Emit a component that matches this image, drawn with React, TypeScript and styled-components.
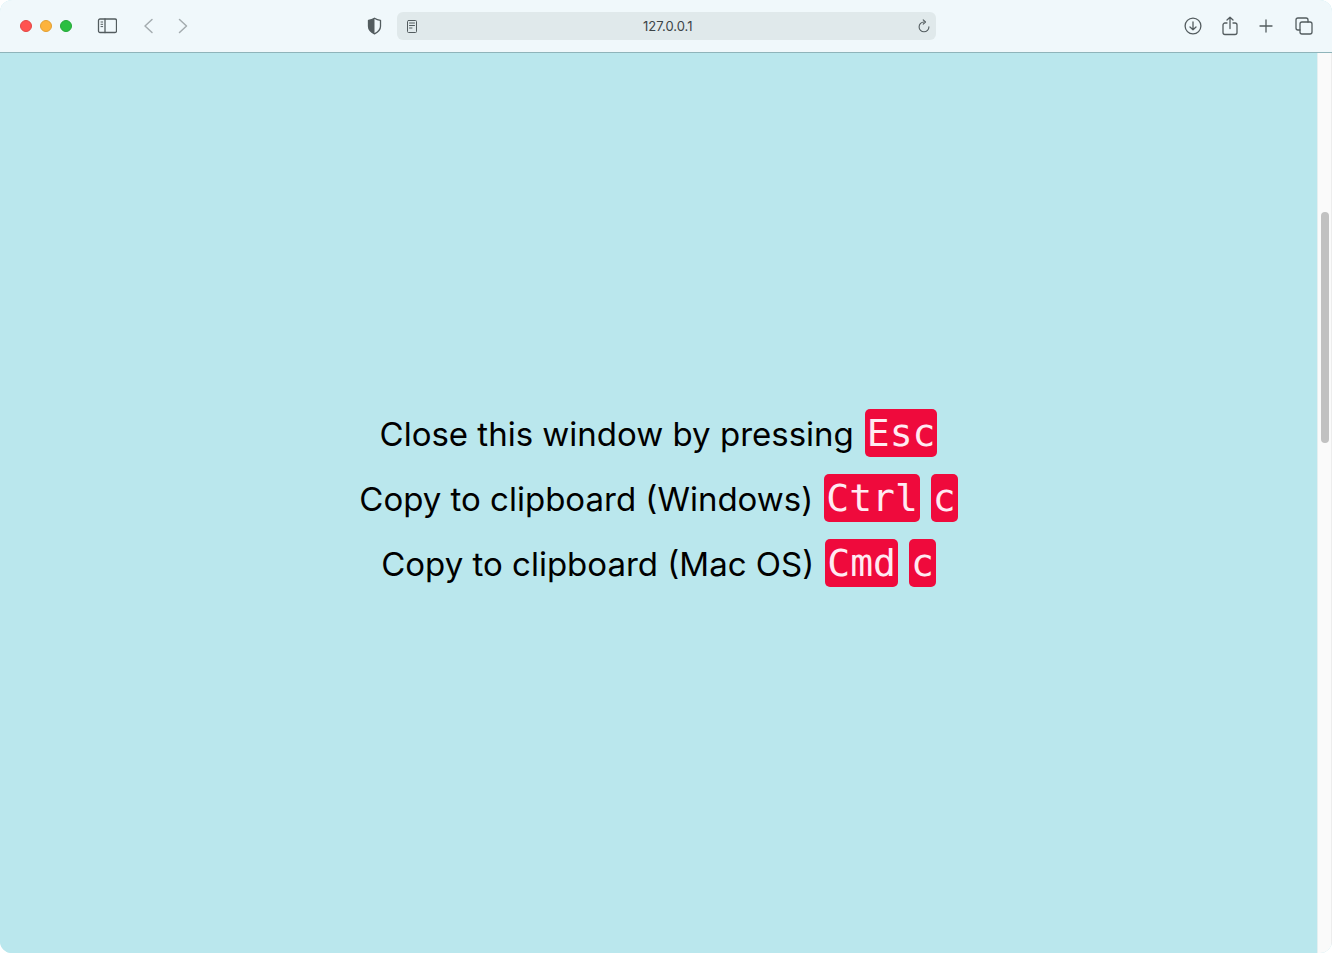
import React from "react";
import styled, { createGlobalStyle } from "styled-components";

const GlobalStyle = createGlobalStyle`
  * { box-sizing: border-box; }
  html, body { margin: 0; background: #fff; }
  body { font-family: Inter, "Liberation Sans", sans-serif; }
`;

const Window = styled.div`
  display: flex;
  flex-direction: column;
  min-height: 100vh;
  border-radius: 12px;
  overflow: hidden;
  background: #bae7ed;
`;

const Toolbar = styled.header`
  display: grid;
  grid-template-columns: 11fr minmax(200px, 570px) 12fr;
  align-items: center;
  height: 53px;
  padding: 0 19px 1px 20px;
  background: #f0f8fb;
  border-bottom: 1px solid #8fb4ba;
`;

const Group = styled.div<{ $gap: number; $end?: boolean }>`
  display: flex;
  align-items: center;
  justify-content: ${(p) => (p.$end ? "flex-end" : "flex-start")};
  gap: ${(p) => p.$gap}px;
`;

const Light = styled.button<{ $color: string; $edge: string }>`
  width: 12px;
  height: 12px;
  padding: 0;
  border: 1px solid ${(p) => p.$edge};
  border-radius: 50%;
  background: ${(p) => p.$color};
`;

const IconButton = styled.button<{ $faint?: boolean }>`
  display: flex;
  flex: none;
  padding: 0;
  border: 0;
  background: none;
  color: ${(p) => (p.$faint ? "#a4acaf" : "#535c5f")};
`;

const Nav = styled.nav`
  display: flex;
  align-items: center;
  gap: 14px;
`;

const AddressBar = styled.div`
  display: flex;
  flex: 1;
  min-width: 0;
  align-items: center;
  height: 28px;
  padding: 0 5px 0 8px;
  border-radius: 6px;
  background: #e0e9eb;
`;

const AddressInput = styled.input`
  flex: 1;
  min-width: 0;
  padding: 0;
  border: 0;
  outline: 0;
  background: none;
  color: #3c4447;
  font: 400 13px/16px Inter, "Liberation Sans", sans-serif;
  text-align: center;
`;

const Viewport = styled.div`
  display: flex;
  flex: 1;
`;

const Content = styled.main`
  display: flex;
  flex: 1;
  flex-direction: column;
  align-items: center;
  justify-content: center;
  padding-bottom: 10px;
  background: #bae7ed;
`;

const Shortcut = styled.p`
  display: flex;
  align-items: baseline;
  gap: 11px;
  margin: 0;
  padding: 8px 0 9px;
  color: #000;
  font-size: 33px;
  line-height: 40px;
`;

const Key = styled.kbd`
  padding: 2px;
  border-radius: 5px;
  background: #ef0a3c;
  color: #ffeaf2;
  font: 400 38px/44px "DejaVu Sans Mono", monospace;
`;

const ScrollTrack = styled.div`
  width: 15px;
  padding: 159px 3px 0;
  border-left: 1px solid #e4eff1;
  border-right: 1px solid #ededed;
  background: #fafafa;
`;

const ScrollThumb = styled.div`
  width: 8px;
  height: 231px;
  border-radius: 4px;
  background: #c1c1c1;
`;

type IconProps = { w: number; h: number; stroke?: number; children: React.ReactNode };

const Icon = ({ w, h, stroke = 1.3, children }: IconProps) => (
  <svg
    width={w}
    height={h}
    viewBox={`0 0 ${w} ${h}`}
    fill="none"
    stroke="currentColor"
    strokeWidth={stroke}
    strokeLinecap="round"
    strokeLinejoin="round"
    aria-hidden="true"
  >
    {children}
  </svg>
);

const shortcuts = [
  { label: "Close this window by pressing", keys: ["Esc"] },
  { label: "Copy to clipboard (Windows)", keys: ["Ctrl", "c"] },
  { label: "Copy to clipboard (Mac OS)", keys: ["Cmd", "c"] },
];

export default function App() {
  return (
    <>
      <GlobalStyle />
      <Window>
        <Toolbar>
          <Group $gap={25}>
            <Group $gap={8}>
              <Light $color="#ff5350" $edge="#e34744" aria-label="Close" />
              <Light $color="#fdb33c" $edge="#e2a033" aria-label="Minimize" />
              <Light $color="#2bbf41" $edge="#24a838" aria-label="Zoom" />
            </Group>
            <IconButton aria-label="Sidebar">
              <Icon w={20} h={16}>
                <rect x="1.5" y="1" width="18" height="13.5" rx="1.5" />
                <path d="M8 1v13.5" />
                <path d="M4 4h1.700M4 6.300h1.700M4 8.600h1.700" strokeWidth="1" />
              </Icon>
            </IconButton>
            <Nav aria-label="History">
              <IconButton $faint aria-label="Back">
                <Icon w={12} h={16} stroke={1.5}>
                  <path d="M10 1.500 3 8l7 6.500" />
                </Icon>
              </IconButton>
              <IconButton $faint aria-label="Forward">
                <Icon w={20} h={16} stroke={1.5}>
                  <path d="m11.500 1.500 7 6.500-7 6.500" />
                </Icon>
              </IconButton>
            </Nav>
          </Group>
          <Group $gap={15}>
            <IconButton aria-label="Privacy report">
              <Icon w={16} h={18}>
                <path d="M8.500 1.200c1.700 1.200 3.700 1.900 6 2.100v6c0 3.400-2.400 5.800-6 7.500-3.600-1.700-6-4.100-6-7.500v-6c2.300-.2 4.300-.9 6-2.100Z" />
                <path d="M8.500 1.200v15.600c-3.600-1.700-6-4.100-6-7.500v-6c2.300-.2 4.300-.9 6-2.100Z" fill="currentColor" stroke="none" />
              </Icon>
            </IconButton>
            <AddressBar>
              <IconButton aria-label="Reader">
                <Icon w={14} h={14} stroke={1}>
                  <rect x="2.500" y="1.500" width="9" height="12" rx="1" />
                  <path d="M4.500 4h5M4.500 6.500h5M4.500 9H7" />
                </Icon>
              </IconButton>
              <AddressInput aria-label="Address" defaultValue="127.0.0.1" />
              <IconButton aria-label="Reload">
                <Icon w={14} h={14} stroke={1.1}>
                  <path d="M7 3a4.900 4.900 0 1 0 4.900 4.900" />
                  <path d="M6.200.800 8.500 3 6.200 5.200" />
                </Icon>
              </IconButton>
            </AddressBar>
          </Group>
          <Group $gap={19} $end>
            <IconButton aria-label="Downloads">
              <Icon w={18} h={18}>
                <circle cx="9" cy="9" r="7.900" />
                <path d="M9 5v7.800M6 10l3 2.800 3-2.800" />
              </Icon>
            </IconButton>
            <IconButton aria-label="Share">
              <Icon w={18} h={20}>
                <path d="M6 7H4a2 2 0 0 0-2 2v7.500a2 2 0 0 0 2 2h10a2 2 0 0 0 2-2V9a2 2 0 0 0-2-2h-2" />
                <path d="M9 12.500V1.200M6 4l3-2.800L12 4" />
              </Icon>
            </IconButton>
            <IconButton aria-label="New tab">
              <Icon w={16} h={16}>
                <path d="M8 2v12M2 8h12" />
              </Icon>
            </IconButton>
            <IconButton aria-label="Tab overview">
              <Icon w={20} h={18}>
                <rect x="7" y="5" width="12" height="12" rx="2" />
                <path d="M7 13H5a2 2 0 0 1-2-2V3a2 2 0 0 1 2-2h8a2 2 0 0 1 2 2v2" />
              </Icon>
            </IconButton>
          </Group>
        </Toolbar>
        <Viewport>
          <Content>
            {shortcuts.map((s) => (
              <Shortcut key={s.label}>
                <span>{s.label}</span>
                {s.keys.map((k) => (
                  <Key key={k}>{k}</Key>
                ))}
              </Shortcut>
            ))}
          </Content>
          <ScrollTrack>
            <ScrollThumb />
          </ScrollTrack>
        </Viewport>
      </Window>
    </>
  );
}
